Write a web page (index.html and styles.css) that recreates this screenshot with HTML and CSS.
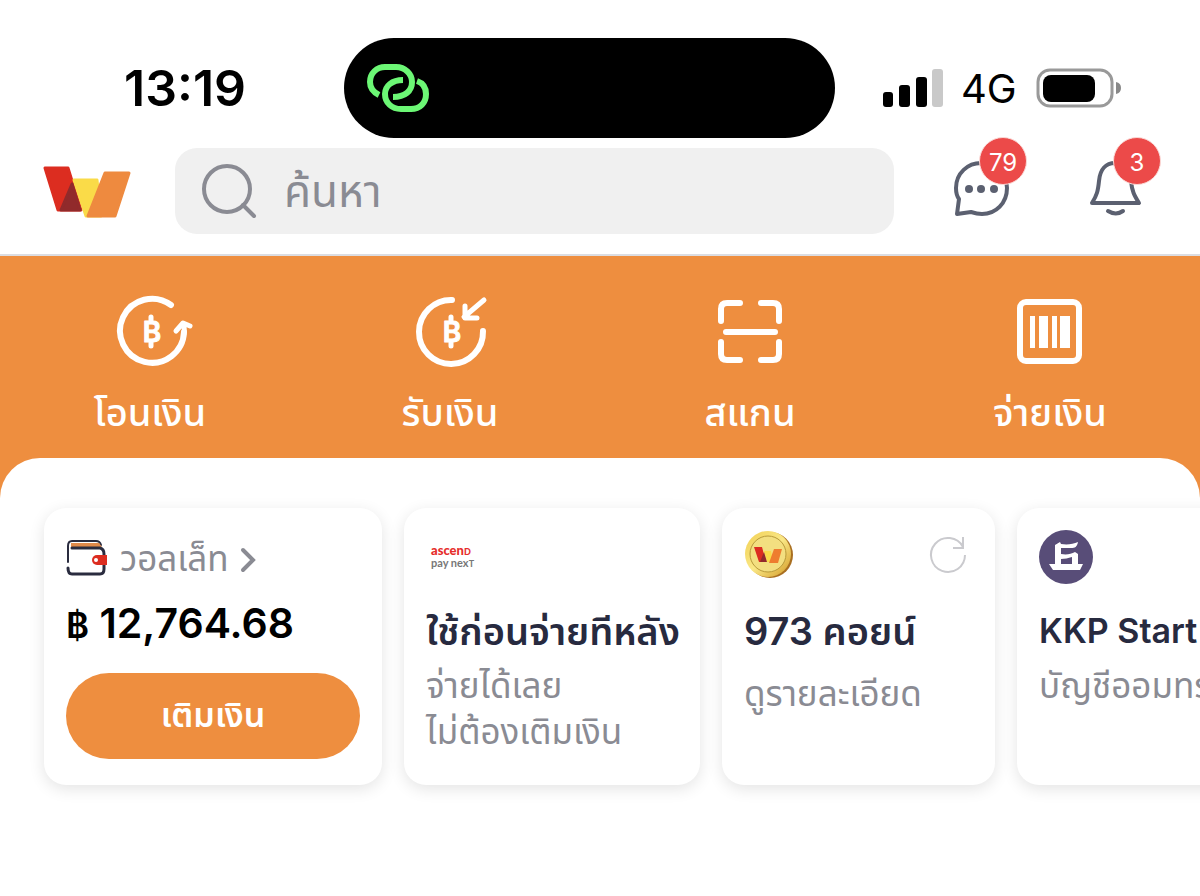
FILE: index.html
```html
<!DOCTYPE html>
<html lang="th">
	<head>
		<meta charset="UTF-8"/>
		<meta name="viewport" content="width=device-width, initial-scale=1.0"/>
		<title>วอลเล็ท</title>
		<link rel="stylesheet" href="styles.css">
	</head>
	<body>
	  <header class="header">
		<div class="status">
		  <span class="time">13:19</span>
		  <div class="island">
			<svg width="62" height="48" viewBox="0 0 62 48" fill="none" stroke="#6cf775" stroke-width="6">
			  <path d="M12 31C6 28 3 24 3 18C3 9 10 3 18 3H29C38 3 45 10 45 18C45 27 38 33 26 33"/>
			  <path d="M36 16C25 16 18 22 18 30C18 39 25 45 34 45H44C53 45 59 39 59 30C59 24 56 19 50 17"/>
			</svg>
		  </div>
		  <div class="signal">
			<svg width="60" height="38" viewBox="0 0 60 38">
			  <rect x="0" y="23" width="10" height="15" rx="3"/>
			  <rect x="16" y="16" width="11" height="22" rx="3"/>
			  <rect x="33" y="8" width="11" height="30" rx="3"/>
			  <rect x="49" y="0" width="11" height="38" rx="3" fill="#c9c9c9"/>
			</svg>
			<span>4G</span>
			<svg width="86" height="40" viewBox="0 0 86 40">
			  <rect x="3" y="2" width="74" height="36" rx="12" fill="none" stroke="#999" stroke-width="3"/>
			  <rect x="8" y="7" width="52" height="27" rx="8"/>
			  <path d="M81 14Q86 15 86 20Q86 25 81 26Z" fill="#888"/>
			</svg>
		  </div>
		</div>
		<div class="topbar">
		  <a href="#" class="logo" aria-label="หน้าแรก">
			<svg width="88" height="52" viewBox="0 0 88 52" stroke-linejoin="round" stroke-width="3">
			  <path d="M2 2H25L38 44H15Z" fill="#dc2d20" stroke="#dc2d20"/>
			  <path d="M31 14H54L58 50H43Z" fill="#fadb48" stroke="#fadb48"/>
			  <path d="M29 18L37 44H18Z" fill="#912a2b" stroke="#912a2b"/>
			  <path d="M62 7H86L72 50H45Z" fill="#ee8a3f" stroke="#ee8a3f"/>
			</svg>
		  </a>
		  <label class="search">
			<svg width="56" height="56" viewBox="0 0 56 56" fill="none" stroke="#8a8b93" stroke-width="4" stroke-linecap="round">
			  <circle cx="25" cy="26" r="23"/>
			  <path d="M41 42L52 53"/>
			</svg>
			<input type="search" placeholder="ค้นหา" aria-label="ค้นหา">
		  </label>
		  <div class="tools">
			<button type="button" class="tool" aria-label="ข้อความ">
			  <svg width="56" height="56" viewBox="0 0 56 56" fill="none" stroke="#5b6070" stroke-width="4" stroke-linejoin="round">
				<path d="M3 53L5 38C2 34 2 30 2 27C2 12 14 2 27 2C42 2 53 13 53 27C53 42 42 53 28 53C23 53 20 52 17 51Z"/>
				<g fill="#5b6070" stroke="none"><circle cx="15" cy="28" r="4"/><circle cx="27" cy="28" r="4"/><circle cx="40" cy="28" r="4"/></g>
			  </svg>
			  <span class="badge">79</span>
			</button>
			<button type="button" class="tool" aria-label="การแจ้งเตือน">
			  <svg width="56" height="56" viewBox="0 0 56 56" fill="none" stroke="#5b6070" stroke-width="4" stroke-linejoin="round" stroke-linecap="round">
				<path d="M4 42C9 34 10 30 11 20C12 8 18 2 27 2C36 2 42 8 43 20C44 30 46 34 51 42Z"/>
				<path d="M20 50Q28 55 35 50"/>
			  </svg>
			  <span class="badge">3</span>
			</button>
		  </div>
		</div>
	  </header>

	  <nav class="actions">
		<a href="#">
		  <svg width="80" height="80" viewBox="0 0 80 80" fill="none" stroke="#fff" stroke-width="6" stroke-linecap="round" stroke-linejoin="round">
			<path d="M61 13A32 32 0 1 0 74 40"/>
			<path d="M66 39L73 31L80 34M73 32Q75 36 74 42" stroke-width="5"/>
			<text x="42" y="50" class="baht">B</text>
			<path d="M41 25V28M41 51V54" stroke-width="5"/>
		  </svg>
		  <span>โอนเงิน</span>
		</a>
		<a href="#">
		  <svg width="80" height="80" viewBox="0 0 80 80" fill="none" stroke="#fff" stroke-width="6" stroke-linecap="round" stroke-linejoin="round">
			<path d="M42 8A32 32 0 1 0 73 39"/>
			<path d="M74 8L54 25M55 14V26H67" stroke-width="5"/>
			<text x="42" y="50" class="baht">B</text>
			<path d="M41 25V28M41 51V54" stroke-width="5"/>
		  </svg>
		  <span>รับเงิน</span>
		</a>
		<a href="#">
		  <svg width="80" height="80" viewBox="0 0 80 80" fill="none" stroke="#fff" stroke-width="6" stroke-linecap="round">
			<path d="M30 11H17Q11 11 11 17V29M51 11H63Q69 11 69 17V29M11 50V62Q11 68 17 68H30M51 68H63Q69 68 69 62V50M16 40H65"/>
		  </svg>
		  <span>สแกน</span>
		</a>
		<a href="#">
		  <svg width="80" height="80" viewBox="0 0 80 80" fill="#fff">
			<rect x="10" y="10" width="59" height="59" rx="6" fill="none" stroke="#fff" stroke-width="6"/>
			<path d="M20 24H25V56H20ZM29 24H38V56H29ZM42 24H47V56H42ZM50 24H60V56H50Z"/>
		  </svg>
		  <span>จ่ายเงิน</span>
		</a>
	  </nav>

	  <main class="sheet">
		<section class="card wallet">
		  <a href="#" class="wallet-link">
			<svg width="42" height="40" viewBox="0 0 42 40" fill="none" stroke="#2a2c3f" stroke-width="3" stroke-linecap="round">
			  <path d="M2 22V6Q2 1 6 1H30Q34 1 35 5" stroke-width="2"/>
			  <path d="M5 3H33L36 7H5Z" fill="#e08a4a" stroke="none"/>
			  <path d="M6 8H34Q38 9 38 14V29Q38 34 34 34H6Q2 34 2 28"/>
			  <path d="M31 15H41V25H31A5 5 0 0 1 31 15Z" fill="#dc2d20" stroke="none"/>
			  <circle cx="30" cy="20" r="2" fill="#fff" stroke="none"/>
			</svg>
			<span>วอลเล็ท</span>
			<svg width="14" height="24" viewBox="0 0 14 24" fill="none" stroke="#8a8b93" stroke-width="4" stroke-linecap="round">
			  <path d="M2 2L12 12L2 22"/>
			</svg>
		  </a>
		  <p class="balance"><span>฿</span> 12,764.68</p>
		  <button type="button" class="topup">เติมเงิน</button>
		</section>

		<section class="card paynext">
		  <div class="card-top">
			<p class="ascend"><b>ascen<small>D</small></b>pay nex<small>T</small></p>
		  </div>
		  <h2>ใช้ก่อนจ่ายทีหลัง</h2>
		  <p>จ่ายได้เลย<br>ไม่ต้องเติมเงิน</p>
		</section>

		<section class="card coins">
		  <div class="card-top">
			<svg width="50" height="50" viewBox="0 0 50 50">
			  <defs>
				<linearGradient id="gold" x1="0" y1="0" x2="1" y2="1">
				  <stop offset="0" stop-color="#f1cf52"/>
				  <stop offset=".5" stop-color="#fae887"/>
				  <stop offset="1" stop-color="#d39a25"/>
				</linearGradient>
			  </defs>
			  <circle cx="26" cy="25" r="23" fill="#a96f21"/>
			  <circle cx="24" cy="24" r="23" fill="url(#gold)"/>
			  <circle cx="24" cy="24" r="18" fill="#f3df80" stroke="#b89a3a"/>
			  <path d="M10 17H18L22 32H15Z" fill="#dc2d20"/>
			  <path d="M20 21H27L29 32H23Z" fill="#fadb48"/>
			  <path d="M20 22L23 32H16Z" fill="#912a2b"/>
			  <path d="M30 19H38L34 33H25Z" fill="#ee7d2f"/>
			</svg>
			<button type="button" class="refresh" aria-label="รีเฟรช">
			  <svg width="38" height="38" viewBox="0 0 38 38" fill="none" stroke="#cacace" stroke-width="2">
				<path d="M36 19A17 17 0 1 1 34 11"/>
				<path d="M34 1V12H24"/>
			  </svg>
			</button>
		  </div>
		  <h2>973 คอยน์</h2>
		  <p>ดูรายละเอียด</p>
		</section>

		<section class="card saving">
		  <div class="card-top">
			<svg width="55" height="55" viewBox="0 0 55 55">
			  <circle cx="27" cy="27" r="27" fill="#584d78"/>
			  <path d="M16 15L21 12L22 14C29 15 34 14 39 12C38 17 36 18 32 18H22V24C28 25 32 24 36 22L39 24V34H44L41 40H14L10 34H16ZM22 29V34H33V27C29 28 26 29 22 29Z" fill="#fff" fill-rule="evenodd"/>
			</svg>
		  </div>
		  <h2>KKP Start</h2>
		  <p>บัญชีออมทรัพย์</p>
		</section>
	  </main>
	</body>
</html>
```

FILE: styles.css
```css
* {
  box-sizing: border-box;
}
body {
  margin: 0;
  min-height: 100vh;
  overflow-x: hidden;
  background: #fff;
  color: #272a3f;
  font-family: Inter, "Noto Sans Thai", "Noto Sans", sans-serif;
}
h2, p {
  margin: 0;
}
a {
  color: inherit;
  text-decoration: none;
}
svg {
  display: block;
  flex: none;
  overflow: visible;
}
button {
  border: 0;
  padding: 0;
  background: transparent;
  font-family: inherit;
  cursor: pointer;
}
.header {
  padding-top: 38px;
  border-bottom: 2px solid #dcdde2;
}
.status {
  display: grid;
  grid-template-columns: 344px 1fr 317px;
  color: #000;
}
.time {
  align-self: center;
  padding-left: 124px;
  font-size: 50px;
  font-weight: 600;
}
.island {
  display: flex;
  align-items: center;
  height: 100px;
  margin-right: 48px;
  padding-left: 23px;
  border-radius: 50px;
  background: #000;
}
.signal {
  display: flex;
  align-items: center;
  gap: 18px;
  font-size: 40px;
}
.topbar {
  display: flex;
  align-items: center;
  gap: 44px;
  padding: 10px 40px 20px 43px;
}
.logo {
  padding-top: 2px;
}
.search {
  display: flex;
  flex: 1;
  align-items: center;
  gap: 24px;
  min-width: 0;
  height: 86px;
  padding: 0 27px;
  border-radius: 22px;
  background: #f0f0f0;
}
.search input {
  flex: 1;
  min-width: 0;
  border: 0;
  outline: none;
  background: transparent;
  font-family: inherit;
  font-size: 44px;
}
.search input::placeholder {
  color: #8a8b93;
}
.tools {
  display: flex;
  gap: 78px;
  padding: 0 16px 4px 16px;
}
.tool {
  position: relative;
}
.badge {
  position: absolute;
  top: -24px;
  right: -17px;
  width: 48px;
  height: 48px;
  border: 1px solid #fbd9d6;
  border-radius: 50%;
  background: #ec4a49;
  color: #fff;
  font-size: 24px;
  font-weight: 400;
  line-height: 50px;
}
.actions {
  display: grid;
  grid-template-columns: repeat(4, 1fr);
  padding: 36px 0 66px;
  background: #ee8e3f;
  color: #fff;
}
.actions a {
  display: flex;
  flex-direction: column;
  align-items: center;
  gap: 20px;
  font-size: 38px;
  font-weight: 500;
  line-height: 40px;
}
.baht {
  font-size: 28px;
  font-weight: 600;
  text-anchor: middle;
  fill: #fff;
  stroke-width: 1px;
}
.sheet {
  display: flex;
  gap: 22px;
  margin-top: -40px;
  padding: 50px 44px 60px;
  overflow: hidden;
  border-radius: 40px 40px 0 0;
  background: #fff;
}
.card {
  flex: none;
  min-height: 277px;
  padding: 22px;
  border-radius: 22px;
  background: #fff;
  box-shadow: 0 4px 16px rgba(0, 0, 0, 0.11);
  white-space: nowrap;
}
.card h2 {
  margin-bottom: 4px;
  font-size: 38px;
  font-weight: 600;
  line-height: 54px;
}
.card p {
  color: #8a8b93;
  font-size: 35px;
  line-height: 46px;
}
.card-top {
  display: flex;
  align-items: flex-start;
  justify-content: space-between;
  height: 74px;
}
.wallet {
  width: 338px;
}
.wallet-link {
  display: flex;
  align-items: center;
  gap: 12px;
  height: 60px;
  color: #8a8b93;
  font-size: 35px;
}
.wallet .balance {
  margin-bottom: 15px;
  color: #000;
  font-size: 41px;
  font-weight: 600;
  line-height: 66px;
}
.balance span {
  font-size: 35px;
}
.topup {
  width: 100%;
  height: 86px;
  border-radius: 44px;
  background: #ee8e3f;
  color: #fff;
  font-size: 34px;
  font-weight: 600;
}
.paynext {
  width: 296px;
}
.card .ascend {
  padding: 15px 0 0 5px;
  color: #777;
  font-family: Lato, sans-serif;
  font-size: 11px;
  font-weight: 700;
  line-height: 11px;
}
.ascend b {
  display: block;
  color: #e62e2c;
  font-size: 13px;
  font-weight: 900;
}
.ascend small {
  font-size: 9px;
}
.coins {
  width: 273px;
}
.coins h2 {
  margin-bottom: 12px;
}
.refresh {
  padding: 6px;
}
.saving {
  width: 300px;
}
.saving h2 {
  font-size: 34px;
}
```
